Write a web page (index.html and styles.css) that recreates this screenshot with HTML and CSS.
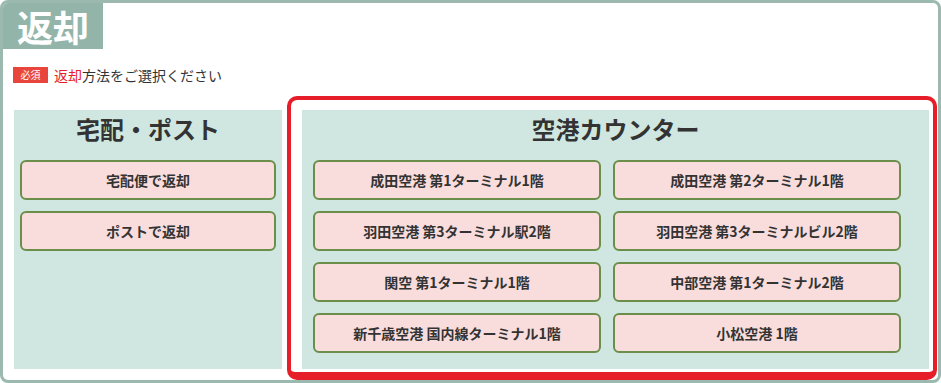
FILE: index.html
```html
<!DOCTYPE html>
<html lang="ja">
<head>
    <meta charset="UTF-8">
    <title>返却方法</title>
    <link rel="stylesheet" href="styles.css">
</head>
<body>
    <div class="box">
        <div class="tab">返却</div>
        <p class="notice"><span class="badge">必須</span><span class="red">返却</span>方法をご選択ください</p>

        <div class="columns">
            <div class="panel panel-left">
                <h2>宅配・ポスト</h2>
                <div class="list">
                    <button>宅配便で返却</button>
                    <button>ポストで返却</button>
                </div>
            </div>

            <div class="highlight">
                <div class="panel panel-right">
                    <h2>空港カウンター</h2>
                    <div class="grid">
                        <button>成田空港 第1ターミナル1階</button>
                        <button>成田空港 第2ターミナル1階</button>
                        <button>羽田空港 第3ターミナル駅2階</button>
                        <button>羽田空港 第3ターミナルビル2階</button>
                        <button>関空 第1ターミナル1階</button>
                        <button>中部空港 第1ターミナル2階</button>
                        <button>新千歳空港 国内線ターミナル1階</button>
                        <button>小松空港 1階</button>
                    </div>
                </div>
            </div>
        </div>
    </div>
</body>
</html>
```

FILE: styles.css
```css
body {
    margin: 0;
    font-family: "Noto Sans CJK JP", "Noto Sans", sans-serif;
    color: #333;
    background: #fff;
}
.box {
    width: 941px;
    height: 383px;
    box-sizing: border-box;
    border: 3px solid #9bb9ae;
    border-radius: 8px;
    overflow: hidden;
}
.tab {
    width: 100px;
    height: 46px;
    line-height: 46px;
    background-color: #93b5a9;
    color: #fff;
    font-size: 36px;
    font-weight: bold;
    text-align: center;
}
.notice {
    margin: 18px 0 0 10px;
    display: flex;
    align-items: center;
    height: 16px;
    font-size: 14px;
}
.badge {
    display: inline-block;
    width: 35px;
    height: 16px;
    line-height: 16px;
    margin-right: 6px;
    background-color: #e8463d;
    color: #fff;
    font-size: 10px;
    text-align: center;
}
.red {
    color: #e61e2a;
}
.columns {
    display: flex;
    margin-top: 13px;
    padding: 0 1px 0 11px;
    height: 284px;
}
.panel {
    background-color: #cfe7e0;
}
.panel h2 {
    margin: 0;
    font-size: 24px;
    line-height: 38px;
    text-align: center;
    color: #333;
}
.panel-left {
    width: 268px;
    margin: 14px 0 11px;
}
.list {
    display: flex;
    flex-direction: column;
    gap: 11px;
    padding: 12px 6px 0;
}
.highlight {
    margin-left: 5px;
    flex: 1;
    border: 4px solid #e61e2a;
    border-bottom-width: 8px;
    border-radius: 10px;
    padding: 10px 4px 3px 11px;
    display: flex;
}
.panel-right {
    flex: 1;
}
.grid {
    display: grid;
    grid-template-columns: 288px 288px;
    gap: 11px 12px;
    padding: 12px 0 0 11px;
}
button {
    height: 40px;
    box-sizing: border-box;
    background-color: #f9dddd;
    border: 2px solid #6b8f4a;
    border-radius: 6px;
    font-family: "Noto Sans CJK JP", sans-serif;
    font-size: 14px;
    font-weight: bold;
    color: #333;
    cursor: pointer;
    padding: 0;
}
```
